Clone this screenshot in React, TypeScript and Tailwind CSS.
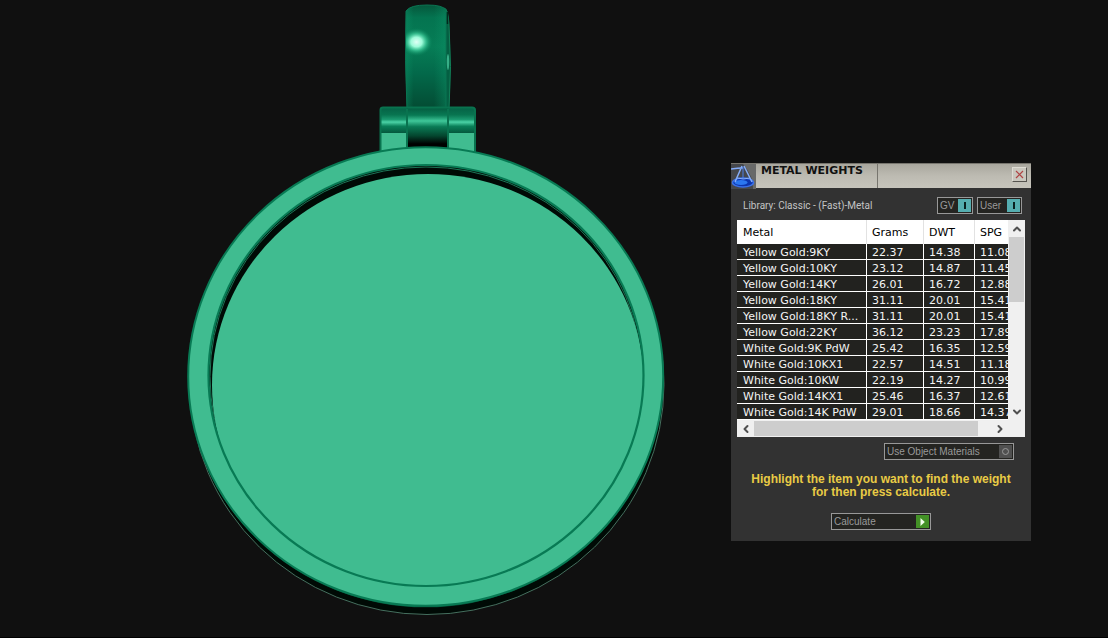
import type { ReactNode } from 'react'
import { ChevronDown, ChevronLeft, ChevronRight, ChevronUp } from 'lucide-react'

interface MetalRow {
  metal: string
  grams: string
  dwt: string
  spg: string
}

const ROWS: MetalRow[] = [
  { metal: 'Yellow Gold:9KY', grams: '22.37', dwt: '14.38', spg: '11.08' },
  { metal: 'Yellow Gold:10KY', grams: '23.12', dwt: '14.87', spg: '11.45' },
  { metal: 'Yellow Gold:14KY', grams: '26.01', dwt: '16.72', spg: '12.88' },
  { metal: 'Yellow Gold:18KY', grams: '31.11', dwt: '20.01', spg: '15.41' },
  { metal: 'Yellow Gold:18KY R...', grams: '31.11', dwt: '20.01', spg: '15.41' },
  { metal: 'Yellow Gold:22KY', grams: '36.12', dwt: '23.23', spg: '17.89' },
  { metal: 'White Gold:9K PdW', grams: '25.42', dwt: '16.35', spg: '12.59' },
  { metal: 'White Gold:10KX1', grams: '22.57', dwt: '14.51', spg: '11.18' },
  { metal: 'White Gold:10KW', grams: '22.19', dwt: '14.27', spg: '10.99' },
  { metal: 'White Gold:14KX1', grams: '25.46', dwt: '16.37', spg: '12.61' },
  { metal: 'White Gold:14K PdW', grams: '29.01', dwt: '18.66', spg: '14.37' },
]

function Pendant() {
  return (
    <svg viewBox="0 0 731 620" className="block w-full" role="img" aria-label="Pendant model">
      <defs>
        <linearGradient id="bail" x1="0" y1="0" x2="0" y2="1">
          <stop offset="0" stopColor="#05573c" />
          <stop offset="0.12" stopColor="#047450" />
          <stop offset="0.4" stopColor="#067d56" />
          <stop offset="0.65" stopColor="#03694a" />
          <stop offset="1" stopColor="#034a32" />
        </linearGradient>
        <linearGradient id="bailEdge" x1="0" y1="0" x2="1" y2="0">
          <stop offset="0" stopColor="#0d9468" stopOpacity="0.4" />
          <stop offset="0.2" stopColor="#0d9468" stopOpacity="0" />
          <stop offset="0.7" stopColor="#0d9468" stopOpacity="0" />
          <stop offset="1" stopColor="#0d9468" stopOpacity="0.4" />
        </linearGradient>
        <radialGradient id="shine">
          <stop offset="0" stopColor="#e0fff5" />
          <stop offset="0.35" stopColor="#9dfbd9" />
          <stop offset="0.6" stopColor="#3fcb9a" stopOpacity="0.8" />
          <stop offset="1" stopColor="#0a8a60" stopOpacity="0" />
        </radialGradient>
        <linearGradient id="hinge" x1="0" y1="0" x2="0" y2="1">
          <stop offset="0" stopColor="#056044" />
          <stop offset="0.3" stopColor="#087450" />
          <stop offset="0.48" stopColor="#1b9a70" />
          <stop offset="0.58" stopColor="#4bd3a6" />
          <stop offset="0.74" stopColor="#0a8059" />
          <stop offset="1" stopColor="#04583d" />
        </linearGradient>
        <linearGradient id="pin" x1="0" y1="0" x2="0" y2="1">
          <stop offset="0" stopColor="#04583d" />
          <stop offset="0.2" stopColor="#087a54" />
          <stop offset="0.34" stopColor="#3fc799" />
          <stop offset="0.48" stopColor="#0a7a55" />
          <stop offset="0.7" stopColor="#04472f" />
          <stop offset="0.9" stopColor="#000000" />
        </linearGradient>
        <clipPath id="well">
          <ellipse cx="426" cy="375.500" rx="217.500" ry="210.500" />
        </clipPath>
        <clipPath id="bailFace">
          <rect x="406" y="5" width="40" height="105" />
        </clipPath>
      </defs>

      {/* bail loop, side wall first */}
      <path d="M444 8Q448 8 449 24Q452 66 449 110H444Z" fill="#045f42" stroke="#128059" />
      <path d="M406 11Q410 5 427 5Q443 5 446 10V110H407Q404.500 60 406 11Z" fill="url(#bail)" />
      <path d="M406 11Q410 5 427 5Q443 5 446 10V110H407Q404.500 60 406 11Z" fill="url(#bailEdge)" stroke="#0a7552" />
      <path d="M447.500 12V24" stroke="#02281c" strokeWidth="1.500" />
      <ellipse cx="416.500" cy="42" rx="16" ry="14" fill="url(#shine)" clipPath="url(#bailFace)" />
      <ellipse cx="448" cy="62" rx="1.200" ry="8" fill="#43c398" opacity="0.8" />

      {/* hinge and its pin */}
      <path d="M380 110Q380 107 383 107H472Q475 107 475 110V158H380Z" fill="#40bc90" />
      <path d="M380 110Q380 107 383 107H472Q475 107 475 110V133H380Z" fill="url(#hinge)" />
      <rect x="407" y="107" width="41" height="41" fill="url(#pin)" />
      <path d="M380.500 152V110Q380.500 107.500 383 107.500H472Q475 107.500 475 110V152" fill="none" stroke="#09734f" strokeWidth="2" />
      <path d="M407 109V148M448 109V148" stroke="#09734f" strokeWidth="2" />

      {/* back edge */}
      <ellipse cx="427" cy="384.500" rx="237" ry="230" fill="#000a05" stroke="#456f5e" strokeWidth="1" />

      {/* bezel */}
      <ellipse cx="425.700" cy="377.300" rx="237.500" ry="230" fill="#06533a" />
      <ellipse cx="425.700" cy="376.500" rx="237.500" ry="229.300" fill="#40bc90" stroke="#087a54" strokeWidth="2" />
      <ellipse cx="426" cy="375.500" rx="217.500" ry="210.500" fill="#000a05" />
      <ellipse cx="426" cy="376.500" rx="216" ry="209.500" fill="none" stroke="#1d7556" />
      <ellipse cx="428" cy="385" rx="216" ry="211" fill="#40bc90" clipPath="url(#well)" />
      <ellipse cx="426" cy="375.500" rx="217.500" ry="210.500" fill="none" stroke="#087a54" strokeWidth="2.200" />
    </svg>
  )
}

function AppIcon() {
  return (
    <svg viewBox="0 0 25 25" className="h-[25px] w-[25px] shrink-0" aria-hidden="true">
      <rect width="25" height="25" fill="#45474c" />
      <path d="M12 0H25V25H22Q23 13 12 0Z" fill="#686968" />
      <ellipse cx="12" cy="18.500" rx="10.500" ry="4.500" fill="#0c35ae" stroke="#3a70e8" strokeWidth="1.500" />
      <ellipse cx="10" cy="18.500" rx="6.500" ry="2.600" fill="#2b77f0" />
      <path d="M0 5Q7 4 12 4M11 2L4 18M13 2L21 18" fill="none" stroke="#86adf8" strokeWidth="1.500" />
      <path d="M12 3V15" fill="none" stroke="#4a7fe8" />
      <path d="M6 14Q12 16 19 14" fill="none" stroke="#8cb2fb" />
    </svg>
  )
}

interface ToolButtonProps {
  label: string
  className: string
  children: ReactNode
}

function ToolButton({ label, className, children }: ToolButtonProps) {
  return (
    <button
      type="button"
      className={`flex h-[17px] items-center justify-between border border-[#989898] bg-[#242421] pr-px pl-0.5 text-[10px] leading-[14px] text-[#999999] ${className}`}
    >
      <span className="pt-px">{label}</span>
      {children}
    </button>
  )
}

function InfoMark() {
  return (
    <span className="flex h-[13px] w-[13px] items-center justify-center bg-[#55aeb0]" aria-hidden="true">
      <span className="h-[7px] w-0.5 bg-[#0a2020]" />
    </span>
  )
}

function WeightTable() {
  return (
    <div className="flex flex-col bg-[#f0f0f0] text-[11px]">
      <div className="flex">
        <div className="min-w-0 flex-1 overflow-hidden bg-white">
          <table className="w-[306px] table-fixed border-separate border-spacing-0 text-left font-['DejaVu_Sans',sans-serif] whitespace-nowrap">
            <colgroup>
              <col className="w-[130px]" />
              <col className="w-[57px]" />
              <col className="w-[51px]" />
              <col className="w-[68px]" />
            </colgroup>
            <thead>
              <tr className="h-6 bg-white text-black">
                {['Metal', 'Grams', 'DWT', 'SPG'].map((name) => (
                  <th
                    key={name}
                    scope="col"
                    className="border-r border-[#e2e2e2] p-0 pt-[3px] pl-[5px] font-normal first:pl-1.5 last:border-r-0"
                  >
                    {name}
                  </th>
                ))}
              </tr>
            </thead>
            <tbody>
              {ROWS.map((row) => (
                <tr key={row.metal} className="h-4 bg-[#22221f] text-[#f4f4f4]">
                  {[row.metal, row.grams, row.dwt, row.spg].map((value, i) => (
                    <td
                      key={i}
                      className="border-r border-b border-white p-0 pt-[3px] pl-[5px] leading-[12px] first:pl-1.5 last:border-r-0"
                    >
                      {value}
                    </td>
                  ))}
                </tr>
              ))}
            </tbody>
          </table>
        </div>
        <div className="flex w-[17px] shrink-0 flex-col items-center text-[#505050]">
          <button type="button" aria-label="Scroll up" className="flex h-[17px] w-full items-center justify-center">
            <ChevronUp size={12} strokeWidth={4} />
          </button>
          <div className="h-[65px] w-[15px] bg-[#cdcdcd]" />
          <button type="button" aria-label="Scroll down" className="mt-auto flex h-[17px] w-full items-center justify-center">
            <ChevronDown size={12} strokeWidth={4} />
          </button>
        </div>
      </div>
      <div className="mr-[17px] flex h-[17px] items-center text-[#505050]">
        <button type="button" aria-label="Scroll left" className="flex h-full w-[17px] items-center justify-center">
          <ChevronLeft size={12} strokeWidth={4} />
        </button>
        <div className="h-[15px] w-[224px] bg-[#cdcdcd]" />
        <button type="button" aria-label="Scroll right" className="ml-auto flex h-full w-[17px] items-center justify-center">
          <ChevronRight size={12} strokeWidth={4} />
        </button>
      </div>
    </div>
  )
}

export default function App() {
  return (
    <main className="flex min-h-screen items-start border-b border-black bg-[#101010] pr-[77px] font-['Liberation_Sans',Arial,sans-serif]">
      <section className="min-w-0 flex-1">
        <Pendant />
      </section>

      <aside className="mt-[163px] w-[300px] shrink-0 bg-[#323232] pb-[11px]">
        <header className="flex h-[25px] border-t border-[#77756e] bg-linear-to-b from-[#a9a79e] via-[#bdbbb2] to-[#c6c4bb]">
          <AppIcon />
          <h1 className="w-[122px] border-r border-[#77756e] pl-[5px] font-['DejaVu_Sans',sans-serif] text-[11px] leading-[14px] font-bold whitespace-nowrap text-[#111111]">
            METAL WEIGHTS
          </h1>
          <button
            type="button"
            aria-label="Close"
            className="mt-[3px] mr-1 ml-auto flex h-[15px] w-[15px] items-center justify-center border border-t-[#dedcd4] border-r-[#55534e] border-b-[#55534e] border-l-[#dedcd4] bg-[#c9c7be]"
          >
            <svg viewBox="0 0 9 9" className="h-[9px] w-[9px]" aria-hidden="true">
              <path d="M1 1L8 8M8 1L1 8" stroke="#b04444" strokeWidth="1.200" />
            </svg>
          </button>
        </header>

        <div className="flex items-center gap-1 pt-[9px] pr-[9px] pb-1.5 pl-3">
          <p className="mr-auto font-['Roboto',sans-serif] text-[10px] leading-[14px] text-[#c4c4c4]">
            Library: Classic - (Fast)-Metal
          </p>
          <ToolButton label="GV" className="w-[36px]"><InfoMark /></ToolButton>
          <ToolButton label="User" className="w-[45px]"><InfoMark /></ToolButton>
        </div>

        <div className="px-1.5">
          <WeightTable />
        </div>

        <div className="flex justify-end pt-1.5 pr-[17px]">
          <ToolButton label="Use Object Materials" className="w-[130px]">
            <span className="flex h-[13px] w-[13px] items-center justify-center bg-[#505050]" aria-hidden="true">
              <span className="h-[7px] w-[7px] rounded-full border border-[#999999]" />
            </span>
          </ToolButton>
        </div>

        <p className="pt-[13px] text-center text-[12px] leading-[13px] font-bold text-[#e9cb45]">
          Highlight the item you want to find the weight
          <br />
          for then press calculate.
        </p>

        <div className="flex justify-center pt-3.5">
          <ToolButton label="Calculate" className="w-[100px]">
            <span className="flex h-[13px] w-[13px] items-center justify-center bg-[#439126]" aria-hidden="true">
              <svg viewBox="0 0 5 8" className="h-2 w-[5px]">
                <path d="M0.500 0L4.800 4L0.500 8Z" fill="#f2ffec" />
              </svg>
            </span>
          </ToolButton>
        </div>
      </aside>
    </main>
  )
}
